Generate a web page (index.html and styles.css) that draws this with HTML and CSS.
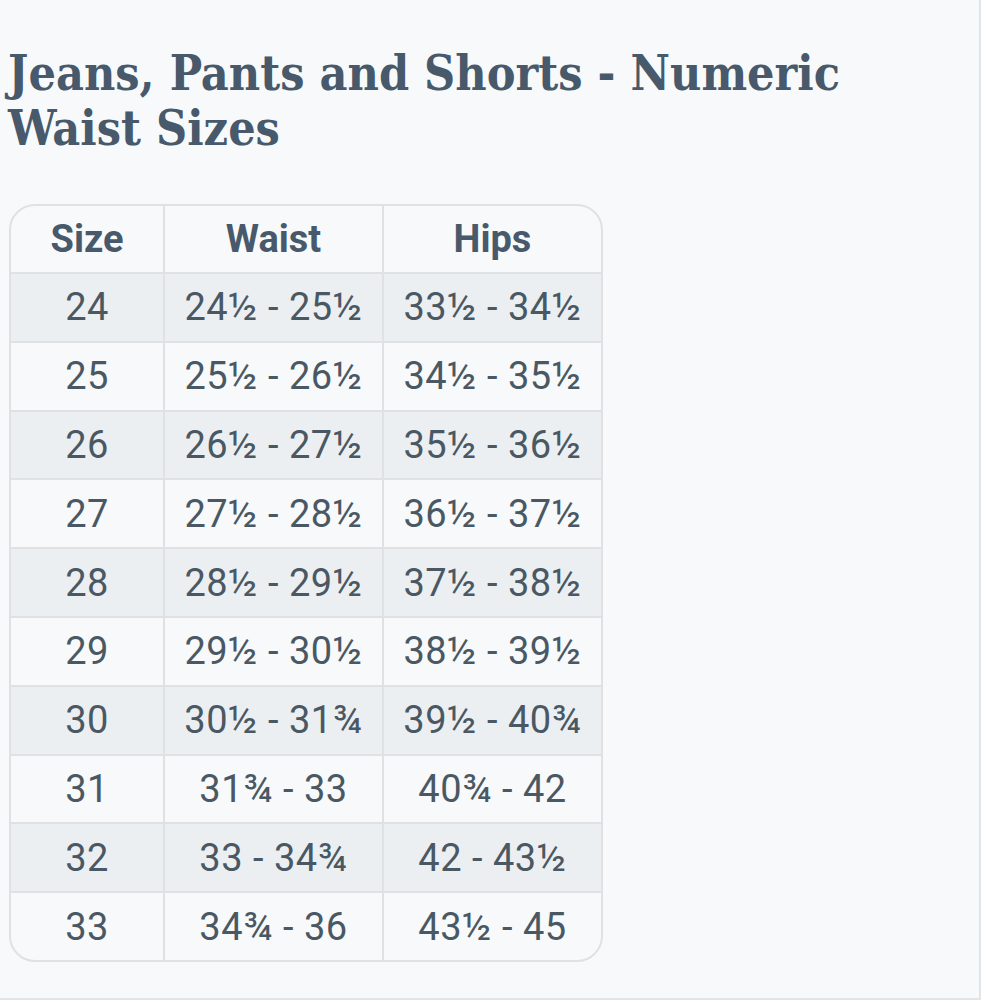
FILE: index.html
```html
<!DOCTYPE html>
<html>
<head>
<meta charset="utf-8">
<link rel="stylesheet" href="styles.css">
</head>
<body>
<div class="page">
  <h1 class="title">Jeans, Pants and Shorts - Numeric Waist Sizes</h1>
  <div class="table-wrap">
    <table class="sizes">
      <colgroup><col class="c1"><col class="c2"><col class="c3"></colgroup>
      <thead>
        <tr><th>Size</th><th>Waist</th><th>Hips</th></tr>
      </thead>
      <tbody>
        <tr><td>24</td><td>24½ - 25½</td><td>33½ - 34½</td></tr>
        <tr><td>25</td><td>25½ - 26½</td><td>34½ - 35½</td></tr>
        <tr><td>26</td><td>26½ - 27½</td><td>35½ - 36½</td></tr>
        <tr><td>27</td><td>27½ - 28½</td><td>36½ - 37½</td></tr>
        <tr><td>28</td><td>28½ - 29½</td><td>37½ - 38½</td></tr>
        <tr><td>29</td><td>29½ - 30½</td><td>38½ - 39½</td></tr>
        <tr><td>30</td><td>30½ - 31¾</td><td>39½ - 40¾</td></tr>
        <tr><td>31</td><td>31¾ - 33</td><td>40¾ - 42</td></tr>
        <tr><td>32</td><td>33 - 34¾</td><td>42 - 43½</td></tr>
        <tr><td>33</td><td>34¾ - 36</td><td>43½ - 45</td></tr>
      </tbody>
    </table>
  </div>
</div>
</body>
</html>
```
FILE: styles.css
```css
html, body {
  margin: 0;
  padding: 0;
  background: #ffffff;
}
.page {
  box-sizing: border-box;
  width: 981px;
  height: 1000px;
  background: #f7f9fb;
  border-right: 2px solid #e2e4e6;
  border-bottom: 2px solid #e2e4e6;
  padding: 46px 0 0 8px;
}
.title {
  margin: 0;
  font-family: "DejaVu Serif Condensed", "DejaVu Serif", serif;
  font-stretch: condensed;
  font-weight: bold;
  font-size: 48px;
  line-height: 55px;
  color: #47596a;
  width: 900px;
}
.table-wrap {
  margin-top: 48px;
  width: 594px;
  margin-left: 1px;
  border: 2px solid #dfe1e3;
  border-radius: 26px;
  overflow: hidden;
  box-sizing: border-box;
}
.sizes {
  width: 100%;
  table-layout: fixed;
  border-collapse: collapse;
  font-family: Roboto, "Liberation Sans", sans-serif;
  font-size: 38px;
  color: #4a5864;
}
.c1 { width: 153px; }
.c2 { width: 219px; }
.c3 { width: 218px; }
.sizes th, .sizes td {
  height: 66.8px;
  padding: 0;
  text-align: center;
  white-space: nowrap;
  border-left: 2px solid #dfe1e3;
  border-top: 2px solid #dfe1e3;
}
.sizes td { letter-spacing: 0.5px; }
.sizes th:first-child, .sizes td:first-child { border-left: none; }
.sizes thead th {
  height: 66px;
  border-top: none;
  font-weight: bold;
  color: #47596a;
}
.sizes tbody tr:nth-child(odd) { background: #eceff1; }
```
